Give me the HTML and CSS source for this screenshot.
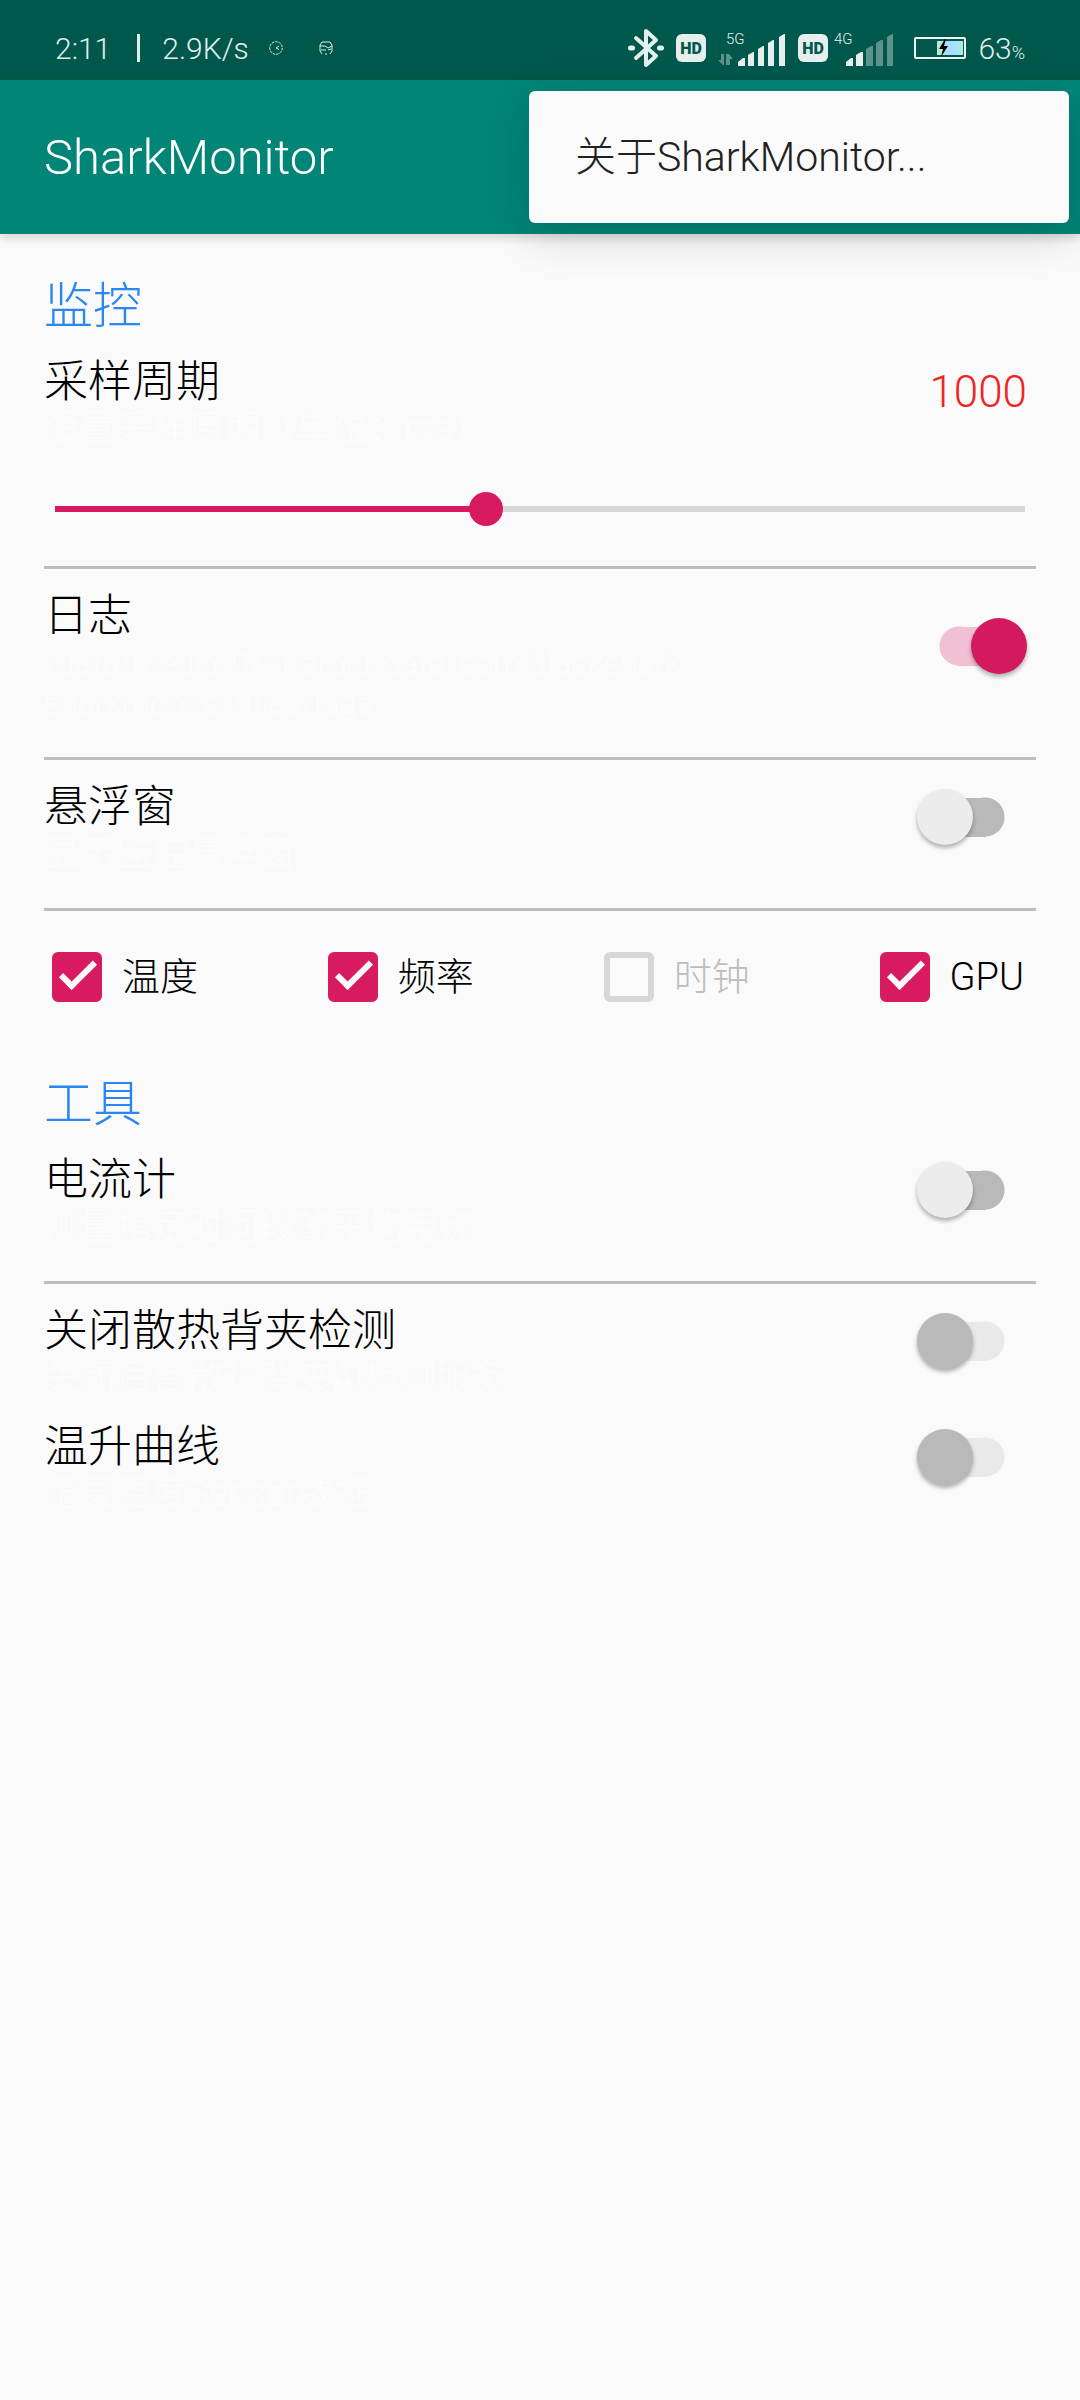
FILE: index.html
```html
<!DOCTYPE html>
<html lang="zh-CN">
<head>
    <meta charset="UTF-8">
    <meta name="viewport" content="width=device-width, initial-scale=1.0">
    <title>SharkMonitor</title>
    <link rel="stylesheet" href="styles.css">
</head>
<body>

    <div class="status-bar">
        <div class="status-left">
            <span>2:11</span>
            <span class="separator"></span>
            <span>2.9K/s</span>
            <span class="notifications">
                <svg width="14" height="14" viewBox="0 0 14 14" fill="none" stroke="#e0eeeb">
                    <circle cx="7" cy="7" r="6.3" stroke-dasharray="2.5 1"/>
                    <path d="M10 5 L7 7 L10 8.5"/>
                </svg>
                <svg width="14" height="14" viewBox="0 0 14 14" fill="none" stroke="#e0eeeb">
                    <path d="M3 1 H11 L13 4 V10 L11 13 M3 13 L1 10 V4 L3 1 M6 13 H8"/>
                    <path d="M1 5 H6 L9 7 L13 5 M2 9 H7 M9 9 L12 8"/>
                </svg>
            </span>
        </div>
        <div class="status-right">
            <svg width="36" height="40" viewBox="0 0 36 40" fill="none" stroke="#e5f0ee" stroke-width="4" stroke-linecap="round" stroke-linejoin="round">
                <path d="M8 10 L28 28 L18 37 V3 L28 12 L8 30"/>
                <path d="M2.5 20 H4.5 M31.5 20 H33.5" stroke-width="5"/>
            </svg>
            <div class="sim">
                <svg width="30" height="28" viewBox="0 0 30 28">
                    <rect width="30" height="28" rx="6" fill="#e5f0ee"/>
                    <text class="hd-text" x="15" y="20" text-anchor="middle">HD</text>
                </svg>
                <svg width="74" height="36" viewBox="0 0 74 36" fill="#e5f0ee">
                    <text class="net-text" x="14" y="14">5G</text>
                    <path opacity="0.4" d="M6 30 H9 V24 H12 V35 H11 Z M14 24 H17 L21 29 H18 V35 H14 Z"/>
                    <path d="M26 32 L31 28 H33 V36 H26 Z M36 25 L41 22 H42 V36 H36 Z M46 19 L51 16 H52 V36 H46 Z M56 13 L61 10 H62 V36 H56 Z M67 7 L72 4 H73 V36 H67 Z"/>
                </svg>
            </div>
            <div class="sim">
                <svg width="30" height="28" viewBox="0 0 30 28">
                    <rect width="30" height="28" rx="6" fill="#e5f0ee"/>
                    <text class="hd-text" x="15" y="20" text-anchor="middle">HD</text>
                </svg>
                <svg width="68" height="36" viewBox="0 0 68 36" fill="#e5f0ee">
                    <text class="net-text" x="0" y="14">4G</text>
                    <path d="M12 32 L17 28 H19 V36 H12 Z M22 25 L27 22 H29 V36 H22 Z"/>
                    <path opacity="0.4" d="M32 19 L37 16 H39 V36 H32 Z M42 13 L47 10 H49 V36 H42 Z M53 7 L58 4 H59 V36 H53 Z"/>
                </svg>
            </div>
            <svg width="52" height="22" viewBox="0 0 52 22">
                <defs>
                    <linearGradient id="charge">
                        <stop offset="0" stop-color="#b8f0c8"/>
                        <stop offset="0.4" stop-color="#a8dcff"/>
                        <stop offset="0.8" stop-color="#a8e4f8"/>
                        <stop offset="1" stop-color="#a8f0d0"/>
                    </linearGradient>
                </defs>
                <rect x="1" y="1" width="50" height="20" rx="1" fill="none" stroke="#f0f8f6" stroke-width="2"/>
                <rect x="23" y="4" width="26" height="14" fill="url(#charge)"/>
                <path d="M31 2 L25 12 H29 L27 20 L34 9 H30 L32 2 Z" fill="#000"/>
            </svg>
            <span class="battery-level">63<small>%</small></span>
        </div>
    </div>

    <header class="app-bar">
        <h1>SharkMonitor</h1>
        <div class="menu" role="menu">
            <button class="menu-item" type="button" role="menuitem">关于SharkMonitor...</button>
        </div>
    </header>

    <main class="settings">
        <section>
            <h2>监控</h2>

            <div class="row">
                <label class="row-text" for="period">
                    <span class="row-title">采样周期</span>
                    <span class="row-summary">设置采样周期（单位：ms）</span>
                </label>
                <output class="period-value" id="periodValue" for="period">1000</output>
            </div>
            <input class="slider" id="period" type="range" min="200" max="2000" step="100" value="1000">
            <hr>

            <div class="row divided">
                <label class="row-text" for="log">
                    <span class="row-title">日志</span>
                    <span class="row-summary path">/data/media/0/Android/data/com.blackshark.<br>sharkmonitor/files/logs</span>
                </label>
                <input class="switch" id="log" type="checkbox" role="switch" checked>
            </div>
            <hr>

            <div class="row divided">
                <label class="row-text" for="float">
                    <span class="row-title">悬浮窗</span>
                    <span class="row-summary">显示监控悬浮窗</span>
                </label>
                <input class="switch" id="float" type="checkbox" role="switch">
            </div>
            <hr>

            <div class="checks">
                <label class="check"><input type="checkbox" checked>温度</label>
                <label class="check"><input type="checkbox" checked>频率</label>
                <label class="check disabled"><input type="checkbox" disabled>时钟</label>
                <label class="check"><input type="checkbox" checked>GPU</label>
            </div>
        </section>

        <section>
            <h2>工具</h2>

            <div class="row divided">
                <label class="row-text" for="ammeter">
                    <span class="row-title">电流计</span>
                    <span class="row-summary">测量指定时间段的平均电流</span>
                </label>
                <input class="switch" id="ammeter" type="checkbox" role="switch">
            </div>
            <hr>

            <div class="row">
                <label class="row-text" for="cooler">
                    <span class="row-title">关闭散热背夹检测</span>
                    <span class="row-summary">关闭后台散热背夹AI检测服务</span>
                </label>
                <input class="switch" id="cooler" type="checkbox" role="switch" disabled>
            </div>

            <div class="row">
                <label class="row-text" for="curve">
                    <span class="row-title">温升曲线</span>
                    <span class="row-summary">记录温度Sensor数据</span>
                </label>
                <input class="switch" id="curve" type="checkbox" role="switch" disabled>
            </div>
        </section>
    </main>

    <script src="script.js"></script>
</body>
</html>
```
FILE: styles.css
```css
*, *::before {
    box-sizing: border-box;
}
body {
    margin: 0;
    min-height: 100vh;
    background-color: #fafafa;
    color: #000;
    font-family: Roboto, "Noto Sans CJK SC", sans-serif;
    font-weight: 300;
}
h1, h2 {
    margin: 0;
    font-weight: 300;
}
svg {
    display: block;
}

/* Status bar */
.status-bar {
    display: flex;
    justify-content: space-between;
    align-items: center;
    height: 80px;
    padding: 16px 55px 0;
    background-color: #00574b;
    color: #e0eeeb;
    font-size: 30px;
}
.status-left, .status-right, .sim, .notifications {
    display: flex;
    align-items: center;
}
.status-left {
    gap: 20px;
}
.separator {
    width: 3px;
    height: 28px;
    margin: 0 2px 0 6px;
    background-color: #e0eeeb;
}
.notifications {
    gap: 36px;
}
.status-right {
    gap: 12px;
}
.sim {
    gap: 6px;
}
.hd-text {
    fill: #00574b;
    font-size: 16px;
    font-weight: 900;
}
.net-text {
    font-size: 15px;
}
.battery-level small {
    font-size: 18px;
}

/* App bar and its menu */
.app-bar {
    position: relative;
    display: flex;
    align-items: center;
    height: 154px;
    padding: 0 44px;
    background-color: #008577;
    color: #fff;
    box-shadow: 0 4px 10px rgba(0, 0, 0, 0.15);
}
.app-bar h1 {
    font-size: 49px;
}
.menu {
    position: absolute;
    top: 11px;
    right: 11px;
    width: 50%;
    border-radius: 6px;
    background-color: #fafafa;
    box-shadow: 0 12px 44px rgba(0, 0, 0, 0.16);
}
.menu-item {
    width: 100%;
    height: 132px;
    padding: 0 46px 8px;
    border: none;
    background: none;
    color: #212121;
    font: inherit;
    font-size: 41px;
    text-align: left;
}

/* Settings list */
.settings {
    padding: 0 44px;
}
h2 {
    padding-top: 45px;
    color: #2a86f0;
    font-size: 49px;
    line-height: 56px;
}
hr {
    height: 3px;
    margin: 0;
    border: none;
    background-color: #bdbdbd;
}
.row {
    display: flex;
    justify-content: space-between;
    align-items: center;
    padding: 0 9px 2px 0;
}
.divided {
    padding-bottom: 34px;
}
.row-text {
    padding-top: 22px;
}
.row-title, .row-summary {
    display: block;
}
.row-title {
    margin-bottom: 2px;
    font-size: 44px;
    line-height: 50px;
}
.row-summary {
    color: #fdfdfd;
    font-size: 36px;
    line-height: 40px;
}
.path {
    font-size: 32px;
}
.period-value {
    color: #f02424;
    font-size: 44px;
}

/* Slider */
.slider {
    -webkit-appearance: none;
    appearance: none;
    display: block;
    width: calc(100% + 12px);
    height: 115px;
    margin: 0 -6px;
    background: linear-gradient(to right, #d81b60 44%, #d7d7d7 44%) center / calc(100% - 34px) 6px no-repeat;
}
.slider::-webkit-slider-thumb {
    -webkit-appearance: none;
    width: 34px;
    height: 34px;
    border-radius: 50%;
    background-color: #d81b60;
}

/* Switches */
.switch {
    -webkit-appearance: none;
    appearance: none;
    display: flex;
    align-items: center;
    flex-shrink: 0;
    width: 110px;
    height: 56px;
    margin: 0;
    background: linear-gradient(#b9b9b9, #b9b9b9) center / 28px 39px no-repeat,
        radial-gradient(circle at 68px 28px, #b9b9b9 19px, transparent 20px);
}
.switch::before {
    content: "";
    width: 56px;
    height: 56px;
    border-radius: 50%;
    background-color: #ececec;
    box-shadow: 0 3px 4px rgba(0, 0, 0, 0.3);
}
.switch:checked {
    justify-content: flex-end;
    background: linear-gradient(#f1c0d4, #f1c0d4) center / 28px 39px no-repeat,
        radial-gradient(circle at 42px 28px, #f1c0d4 19px, transparent 20px);
}
.switch:checked::before {
    background-color: #d41a5e;
}
.switch:disabled {
    background: linear-gradient(#e9e9e9, #e9e9e9) center / 28px 39px no-repeat,
        radial-gradient(circle at 68px 28px, #e9e9e9 19px, transparent 20px);
}
.switch:disabled::before {
    background-color: #b9b9b9;
}

/* Checkboxes */
.checks {
    display: flex;
    justify-content: space-between;
    padding: 41px 12px 30px 8px;
}
.check {
    display: flex;
    align-items: center;
    gap: 20px;
    font-size: 38px;
    line-height: 50px;
}
.check input {
    -webkit-appearance: none;
    appearance: none;
    width: 50px;
    height: 50px;
    margin: 0;
    border: 6px solid #757575;
    border-radius: 6px;
}
.check input:checked {
    border-color: #d81b60;
    background-color: #d81b60;
}
.check input:checked::before {
    content: "";
    display: block;
    width: 36px;
    height: 18px;
    margin: 4px 2px;
    border: solid #fafafa;
    border-width: 0 0 6px 6px;
    transform: rotate(-45deg);
}
.disabled {
    color: #bdbdbd;
}
.disabled input {
    border-color: #d7d7d7;
}
```
FILE: script.js
```js
const period = document.getElementById("period");
const periodValue = document.getElementById("periodValue");

period.addEventListener("input", function () {
    const percent = (period.value - period.min) / (period.max - period.min) * 100;
    period.style.backgroundImage = `linear-gradient(to right, #d81b60 ${percent}%, #d7d7d7 ${percent}%)`;
    periodValue.value = period.value;
});
```
